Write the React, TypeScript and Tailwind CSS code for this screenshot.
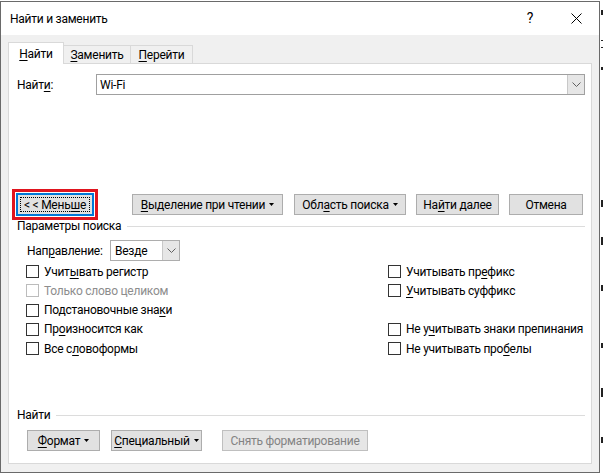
import type { ReactNode } from 'react';

// ─── Мелкие элементы ─────────────────────────────────────────────────────────

function U({ children }: { children: ReactNode }) {
  return <span className="underline underline-offset-[2px] decoration-1">{children}</span>;
}

function Caret() {
  return (
    <svg width="5" height="3" viewBox="0 0 5 3" className="ml-[4px]">
      <path d="M0 0h5L2.5 3z" fill="#000" />
    </svg>
  );
}

function Chevron() {
  return (
    <svg width="9" height="5" viewBox="0 0 9 5">
      <path d="M0.5 0.5L4.5 4.5L8.5 0.5" fill="none" stroke="#606060" strokeWidth="1" />
    </svg>
  );
}

function Btn({ className, children, disabled }: { className: string; children: ReactNode; disabled?: boolean }) {
  return (
    <button
      type="button"
      className={`h-[21px] flex items-center justify-center border leading-none whitespace-nowrap ${
        disabled ? 'bg-[#e6e6e6] border-[#bfbfbf] text-[#838383]' : 'bg-[#e1e1e1] border-[#adadad] text-black'
      } ${className}`}
    >
      {children}
    </button>
  );
}

function Check({ children, disabled }: { children: ReactNode; disabled?: boolean }) {
  return (
    <div className="h-[19.25px] flex items-center whitespace-nowrap">
      <span
        className={`w-[13px] h-[13px] shrink-0 border bg-white ${disabled ? 'border-[#bcbcbc]' : 'border-[#333]'}`}
      />
      <span className={`ml-[5px] ${disabled ? 'text-[#8d8d8d]' : 'text-black'}`}>{children}</span>
    </div>
  );
}

function GroupHeader({ children, className }: { children: ReactNode; className: string }) {
  return (
    <div className={`h-[16px] flex items-center pl-[8px] pr-[6px] ${className}`}>
      <span className="leading-[16px]">{children}</span>
      <span className="flex-1 h-px bg-[#dcdcdc] ml-[6px]" />
    </div>
  );
}

// ─── Диалог «Найти и заменить» ────────────────────────────────────────────────

export default function App() {
  return (
    <div className="w-[603px] h-[475px] bg-white flex overflow-hidden text-[12px] tracking-[-0.25px] text-black font-['Roboto',sans-serif]">
      <div className="w-[600px] h-[472px] mt-px border border-[#6a6a6a] flex flex-col">
        {/* Заголовок окна */}
        <div className="h-[33px] bg-white flex items-center">
          <span className="pl-[9px] flex-1 text-[12px]">Найти и заменить</span>
          <span className="w-[46px] h-full flex items-center justify-center text-[14px]">?</span>
          <span className="w-[46px] h-full flex items-center justify-center">
            <svg width="11" height="11" viewBox="0 0 11 11">
              <path d="M0.5 0.5L10.5 10.5M10.5 0.5L0.5 10.5" stroke="#000" strokeWidth="1" />
            </svg>
          </span>
        </div>

        {/* Тело диалога */}
        <div className="flex-1 bg-[#f0f0f0] px-[7px] pt-[7px] pb-[8px] flex flex-col">
          {/* Вкладки */}
          <div className="h-[21px] flex items-end">
            <div className="relative z-10 w-[56px] h-[22px] -mb-px bg-white border border-b-0 border-[#d9d9d9] flex items-center justify-center">
              <U>Н</U>айти
            </div>
            <div className="w-[67px] h-[18px] border border-l-0 border-b-0 border-[#d9d9d9] flex items-center justify-center">
              <U>З</U>аменить
            </div>
            <div className="w-[62px] h-[18px] border border-l-0 border-b-0 border-[#d9d9d9] flex items-center justify-center">
              <U>П</U>ерейти
            </div>
          </div>

          {/* Содержимое вкладки */}
          <div className="flex-1 bg-white border border-[#d9d9d9] flex flex-col pt-[10px]">
            <div className="h-[21px] flex items-center pl-[8px] pr-[6px]">
              <span className="w-[79px]">
                Найт<U>и</U>:
              </span>
              <div className="flex-1 h-full border border-[#a0a0a0] flex">
                <span className="flex-1 pl-[3px] flex items-center">Wi-Fi</span>
                <span className="w-[17px] bg-[#e6e6e6] border-l border-[#c8c8c8] flex items-center justify-center">
                  <Chevron />
                </span>
              </div>
            </div>

            {/* Кнопки */}
            <div className="mt-[99px] h-[21px] flex items-center pl-[3px]">
              <div className="h-[31px] border-[3px] border-[#e0141e] p-px flex">
                <button
                  type="button"
                  className="w-[78px] h-[23px] bg-[#e1e1e1] border border-[#0078d7] shadow-[inset_0_0_0_1px_#0078d7] p-[3px] flex"
                >
                  <span className="flex-1 border border-dotted border-black flex items-center justify-center leading-none whitespace-nowrap">
                    &lt; &lt; Мень<U>ш</U>е
                  </span>
                </button>
              </div>
              <Btn className="ml-[34px] w-[151px]">
                <U>В</U>ыделение при чтении
                <Caret />
              </Btn>
              <Btn className="ml-[11px] w-[112px]">
                Обл<U>а</U>сть поиска
                <Caret />
              </Btn>
              <Btn className="ml-[10px] w-[83px]">
                На<U>й</U>ти далее
              </Btn>
              <Btn className="ml-[10px] w-[74px]">Отмена</Btn>
            </div>

            {/* Параметры поиска */}
            <GroupHeader className="mt-[3px]">Параметры поиска</GroupHeader>

            <div className="mt-[6px] h-[21px] flex items-center pl-[18px]">
              <span className="w-[83px]">
                Нап<U>р</U>авление:
              </span>
              <div className="w-[70px] h-full border border-[#adadad] flex">
                <span className="flex-1 pl-[4px] flex items-center">Везде</span>
                <span className="w-[17px] bg-[#e6e6e6] border-l border-[#c8c8c8] flex items-center justify-center">
                  <Chevron />
                </span>
              </div>
            </div>

            <div className="mt-px grid grid-cols-[362px_1fr] pl-[17px]">
              <div className="flex flex-col">
                <Check>
                  Учит<U>ы</U>вать регистр
                </Check>
                <Check disabled>Только слово целиком</Check>
                <Check>
                  Подстановочные зна<U>к</U>и
                </Check>
                <Check>
                  Пр<U>о</U>износится как
                </Check>
                <Check>
                  Все с<U>л</U>овоформы
                </Check>
              </div>
              <div className="flex flex-col">
                <Check>
                  Учитывать пр<U>е</U>фикс
                </Check>
                <Check>
                  <U>У</U>читывать суффикс
                </Check>
                <div className="h-[19.25px]" />
                <Check>
                  Не у<U>ч</U>итывать знаки препинания
                </Check>
                <Check>
                  Не учитывать про<U>б</U>елы
                </Check>
              </div>
            </div>

            {/* Найти: формат */}
            <GroupHeader className="mt-[49px]">Найти</GroupHeader>

            <div className="mt-[7px] flex items-center pl-[18px]">
              <Btn className="w-[73px]">
                <U>Ф</U>ормат
                <Caret />
              </Btn>
              <Btn className="ml-[11px] w-[91px]">
                <U>С</U>пециальный
                <Caret />
              </Btn>
              <Btn className="ml-[20px] w-[146px]" disabled>
                Снять форматирование
              </Btn>
            </div>
          </div>
        </div>
      </div>

      {/* Край документа за окном */}
      <div className="w-[3px] flex flex-col items-end">
        <span className="mt-[10px] w-[2px] h-[5px] bg-[#222]" />
        <span className="mt-[25px] w-[2px] h-px bg-[#222]" />
        <span className="mt-[6px] w-[2px] h-px bg-[#222]" />
        <span className="mt-[19px] w-[2px] h-[3px] bg-[#222]" />
        <span className="mt-[130px] w-[2px] h-[7px] bg-[#222]" />
        <span className="mt-[30px] w-[2px] h-[8px] bg-[#222]" />
        <span className="mt-[40px] w-[2px] h-[6px] bg-[#222]" />
        <span className="mt-[52px] w-[2px] h-[5px] bg-[#222]" />
        <span className="mt-[40px] w-[2px] h-[9px] bg-[#222]" />
        <span className="mt-[40px] w-[2px] h-[6px] bg-[#222]" />
      </div>
    </div>
  );
}
